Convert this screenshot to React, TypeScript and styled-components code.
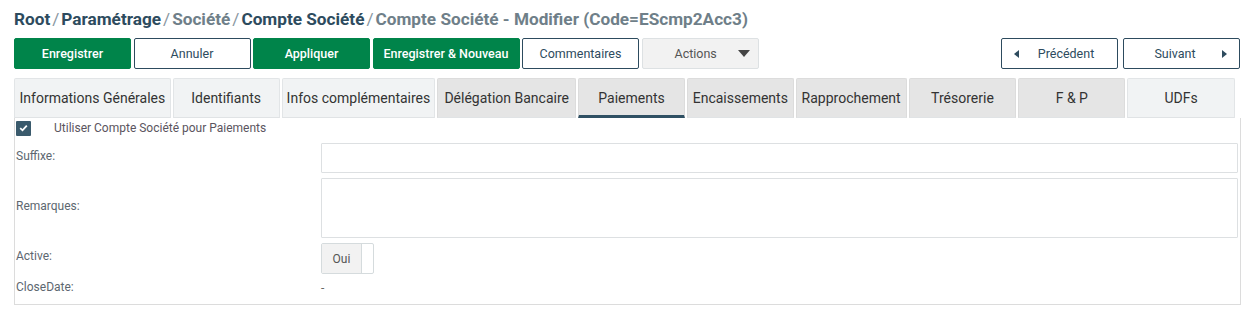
import React from "react";
import styled, { createGlobalStyle } from "styled-components";

const Global = createGlobalStyle`
  html, body { margin: 0; padding: 0; background: #fff; }
  body { font-family: Roboto, "Liberation Sans", Arial, sans-serif; }
  * { box-sizing: border-box; }
`;

const Page = styled.div`
  padding: 9px 14px 0 14px;
  width: 1254px;
`;

const Title = styled.h1`
  margin: 0;
  font-size: 17.2px;
  font-weight: 700;
  line-height: 20px;
  color: #2d4b5e;
  display: flex;
  align-items: baseline;
`;

const Crumb = styled.span<{ $muted?: boolean }>`
  color: ${(p) => (p.$muted ? "#6f7f89" : "#2d4b5e")};
`;

const Sep = styled.span`
  color: #8a979f;
  font-weight: 400;
  margin: 0 2px;
`;

const Toolbar = styled.div`
  display: flex;
  margin-top: 9px;
  height: 31px;
`;

const Group = styled.div<{ $gap: number }>`
  display: flex;
  gap: ${(p) => p.$gap}px;
`;

const Spacer = styled.div`
  flex: 1;
`;

const Btn = styled.button<{ $variant: "primary" | "outline" | "grey"; $w?: number }>`
  width: ${(p) => p.$w ?? 117}px;
  height: 31px;
  border-radius: 2px;
  font-family: inherit;
  font-size: 12.5px;
  display: flex;
  align-items: center;
  justify-content: center;
  gap: 8px;
  padding: 0 8px;
  cursor: pointer;
  ${(p) =>
    p.$variant === "primary"
      ? `background:#00844a;border:1px solid #00844a;color:#fff;font-weight:500;`
      : p.$variant === "outline"
      ? `background:#fff;border:1px solid #2d4b5e;color:#2d4b5e;`
      : `background:#f2f2f2;border:1px solid #dde1e3;color:#555;`}
`;

const ActionsBtn = styled(Btn)`
  justify-content: flex-start;
  padding-left: 32px;
  gap: 0;
`;

const NavBtn = styled(Btn)`
  justify-content: space-between;
  padding: 0 12px 0 12px;
`;

const NavText = styled.span`
  flex: 1;
  text-align: center;
`;

const TriLeft = styled.span`
  width: 0;
  height: 0;
  border-top: 4px solid transparent;
  border-bottom: 4px solid transparent;
  border-right: 5px solid #2d4b5e;
`;
const TriRight = styled.span`
  width: 0;
  height: 0;
  border-top: 4px solid transparent;
  border-bottom: 4px solid transparent;
  border-left: 5px solid #2d4b5e;
`;
const TriDown = styled.span`
  width: 0;
  height: 0;
  border-left: 6px solid transparent;
  border-right: 6px solid transparent;
  border-top: 7px solid #444;
  margin-left: 21px;
`;

const Tabs = styled.div`
  display: flex;
  margin-top: 9px;
  gap: 2px;
  width: 1221px;
`;

const Tab = styled.div<{ $w: number; $light?: boolean; $active?: boolean }>`
  width: ${(p) => p.$w}px;
  height: 40px;
  background: ${(p) => (p.$light ? "#f1f3f4" : "#e5e5e5")};
  border: 1px solid ${(p) => (p.$light ? "#e2e5e7" : "#dcdcdc")};
  border-bottom: ${(p) => (p.$active ? "3px solid #2f5063" : "1px solid #e0e3e5")};
  border-radius: 2px 2px 0 0;
  display: flex;
  align-items: center;
  justify-content: center;
  font-size: 14px;
  color: #333;
  white-space: nowrap;
  padding-top: ${(p) => (p.$active ? 2 : 0)}px;
`;

const Panel = styled.div`
  width: 1227px;
  border: 1px solid #dcdcdc;
  border-top: none;
  padding: 0 1px 5px 1px;
  display: grid;
  grid-template-columns: 305px 917px;
  row-gap: 5px;
  align-items: center;
`;

const CheckRow = styled.div`
  grid-column: 1 / 3;
  display: flex;
  align-items: center;
  height: 20px;
`;

const Check = styled.span`
  width: 15px;
  height: 15px;
  background: #3a5a6c;
  border-radius: 1px;
  display: flex;
  align-items: center;
  justify-content: center;
`;

const CheckLabel = styled.span`
  margin-left: 23px;
  font-size: 12px;
  color: #5b5560;
`;

const Label = styled.div`
  font-size: 12px;
  color: #5d6770;
  padding-bottom: 5px;
`;

const Input = styled.div<{ $h: number }>`
  height: ${(p) => p.$h}px;
  border: 1px solid #dde0e2;
  border-radius: 1px;
  background: #fff;
`;

const Toggle = styled.div`
  display: flex;
  width: 53px;
  height: 31px;
  border: 1px solid #d5dbdd;
  border-radius: 2px;
  overflow: hidden;
`;

const ToggleOn = styled.div`
  width: 40px;
  background: #f2f2f2;
  border-right: 1px solid #d5dbdd;
  display: flex;
  align-items: center;
  justify-content: center;
  font-size: 12px;
  color: #555;
`;

const Dash = styled.div`
  font-size: 12px;
  color: #666;
  height: 20px;
  display: flex;
  align-items: center;
  padding-bottom: 3px;
`;

const tabs: { t: string; w: number; light?: boolean; active?: boolean }[] = [
  { t: "Informations Générales", w: 157, light: true },
  { t: "Identifiants", w: 107, light: true },
  { t: "Infos complémentaires", w: 154, light: true },
  { t: "Délégation Bancaire", w: 139 },
  { t: "Paiements", w: 107, active: true },
  { t: "Encaissements", w: 107 },
  { t: "Rapprochement", w: 111 },
  { t: "Trésorerie", w: 108 },
  { t: "F & P", w: 107 },
  { t: "UDFs", w: 108, light: true },
];

export default function App() {
  return (
    <Page>
      <Global />
      <Title>
        <Crumb>Root</Crumb>
        <Sep>/</Sep>
        <Crumb>Paramétrage</Crumb>
        <Sep>/</Sep>
        <Crumb $muted>Société</Crumb>
        <Sep>/</Sep>
        <Crumb>Compte Société</Crumb>
        <Sep>/</Sep>
        <Crumb $muted>Compte Société - Modifier (Code=EScmp2Acc3)</Crumb>
      </Title>
      <Toolbar>
        <Group $gap={2.5}>
          <Btn $variant="primary">Enregistrer</Btn>
          <Btn $variant="outline">Annuler</Btn>
          <Btn $variant="primary">Appliquer</Btn>
          <Btn $variant="primary" $w={147}>Enregistrer &amp; Nouveau</Btn>
          <Btn $variant="outline">Commentaires</Btn>
          <ActionsBtn $variant="grey">
            Actions
            <TriDown />
          </ActionsBtn>
        </Group>
        <Spacer />
        <Group $gap={5}>
          <NavBtn $variant="outline">
            <TriLeft />
            <NavText>Précédent</NavText>
          </NavBtn>
          <NavBtn $variant="outline">
            <NavText>Suivant</NavText>
            <TriRight />
          </NavBtn>
        </Group>
      </Toolbar>
      <Tabs>
        {tabs.map((x) => (
          <Tab key={x.t} $w={x.w} $light={x.light} $active={x.active}>
            {x.t}
          </Tab>
        ))}
      </Tabs>
      <Panel>
        <CheckRow>
          <Check>
            <svg width="9" height="8" viewBox="0 0 9 8">
              <path d="M1.2 4.2 L3.5 6.3 L7.8 1.6" stroke="#fff" strokeWidth="1.8" fill="none" />
            </svg>
          </Check>
          <CheckLabel>Utiliser Compte Société pour Paiements</CheckLabel>
        </CheckRow>
        <Label>Suffixe:</Label>
        <Input $h={30} />
        <Label>Remarques:</Label>
        <Input $h={60} />
        <Label>Active:</Label>
        <div>
          <Toggle>
            <ToggleOn>Oui</ToggleOn>
          </Toggle>
        </div>
        <Label>CloseDate:</Label>
        <Dash>-</Dash>
      </Panel>
    </Page>
  );
}
